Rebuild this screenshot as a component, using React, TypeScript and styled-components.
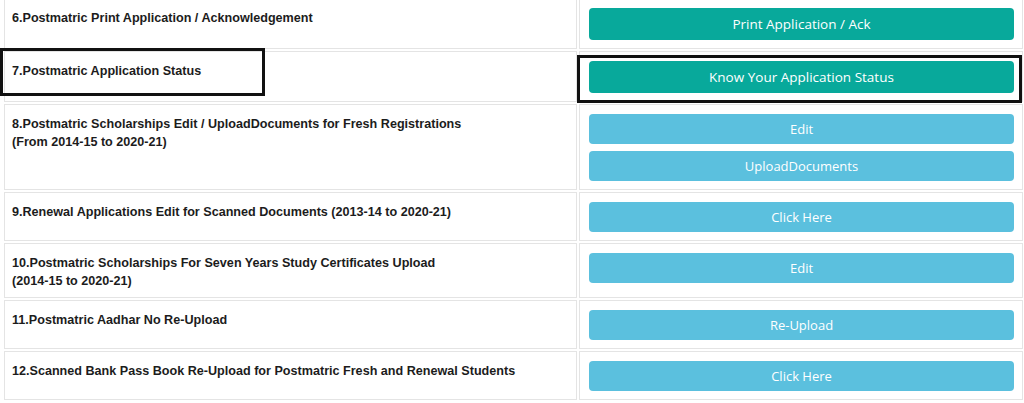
import styled, { createGlobalStyle } from 'styled-components';

type Item = {
  title: string[];
  buttons: string[];
  tone: 'teal' | 'info';
  marked?: boolean;
};

const items: Item[] = [
  { title: ['6.Postmatric Print Application / Acknowledgement'], buttons: ['Print Application / Ack'], tone: 'teal' },
  { title: ['7.Postmatric Application Status'], buttons: ['Know Your Application Status'], tone: 'teal', marked: true },
  {
    title: ['8.Postmatric Scholarships Edit / UploadDocuments for Fresh Registrations', '(From 2014-15 to 2020-21)'],
    buttons: ['Edit', 'UploadDocuments'],
    tone: 'info',
  },
  { title: ['9.Renewal Applications Edit for Scanned Documents (2013-14 to 2020-21)'], buttons: ['Click Here'], tone: 'info' },
  {
    title: ['10.Postmatric Scholarships For Seven Years Study Certificates Upload', '(2014-15 to 2020-21)'],
    buttons: ['Edit'],
    tone: 'info',
  },
  { title: ['11.Postmatric Aadhar No Re-Upload'], buttons: ['Re-Upload'], tone: 'info' },
  { title: ['12.Scanned Bank Pass Book Re-Upload for Postmatric Fresh and Renewal Students'], buttons: ['Click Here'], tone: 'info' },
];

const GlobalStyle = createGlobalStyle`
  html, body {
    margin: 0;
    padding: 0;
    background: #ffffff;
    overflow: hidden;
  }
`;

const Table = styled.div`
  display: grid;
  grid-template-columns: 573px 444px;
  gap: 2px;
  margin: -2px 0 0 4px;
`;

const Row = styled.div`
  display: contents;
`;

const Cell = styled.div`
  position: relative;
  border: 1px solid #e4e4e4;
`;

const TitleCell = styled(Cell)`
  padding: 10px 7px 7px;
  font-family: 'Liberation Sans', Arial, sans-serif;
  font-weight: bold;
  font-size: 12.6px;
  line-height: 18px;
  color: #1c1c1c;
`;

const ActionCell = styled(Cell)`
  display: flex;
  flex-direction: column;
  gap: 7px;
  padding: 9px 8px 8px 9px;
`;

const ActionButton = styled.button<{ $tone: 'teal' | 'info' }>`
  display: flex;
  align-items: center;
  justify-content: center;
  width: 100%;
  height: ${(p) => (p.$tone === 'teal' ? '32px' : '30px')};
  border: none;
  border-radius: 4px;
  background: ${(p) => (p.$tone === 'teal' ? '#08a99b' : '#5bc0de')};
  color: #ffffff;
  font-family: 'Open Sans', sans-serif;
  font-size: ${(p) => (p.$tone === 'teal' ? '13.5px' : '13px')};
  cursor: pointer;
  padding: 0;
`;

// black annotation frames drawn over the row 7 cells
const Marker = styled.div<{ $side: 'left' | 'right' }>`
  position: absolute;
  border: 3px solid #111111;
  pointer-events: none;
  ${(p) =>
    p.$side === 'left'
      ? 'left: -5px; top: -4px; width: 259px; height: 42px;'
      : 'left: -3px; top: 3px; width: 439px; height: 42px;'}
`;

export default function App() {
  return (
    <>
      <GlobalStyle />
      <Table>
        {items.map((item) => (
          <Row key={item.title[0]}>
            <TitleCell>
              {item.marked && <Marker $side="left" />}
              {item.title.map((line) => (
                <div key={line}>{line}</div>
              ))}
            </TitleCell>
            <ActionCell>
              {item.marked && <Marker $side="right" />}
              {item.buttons.map((label) => (
                <ActionButton key={label} $tone={item.tone}>
                  {label}
                </ActionButton>
              ))}
            </ActionCell>
          </Row>
        ))}
      </Table>
    </>
  );
}
